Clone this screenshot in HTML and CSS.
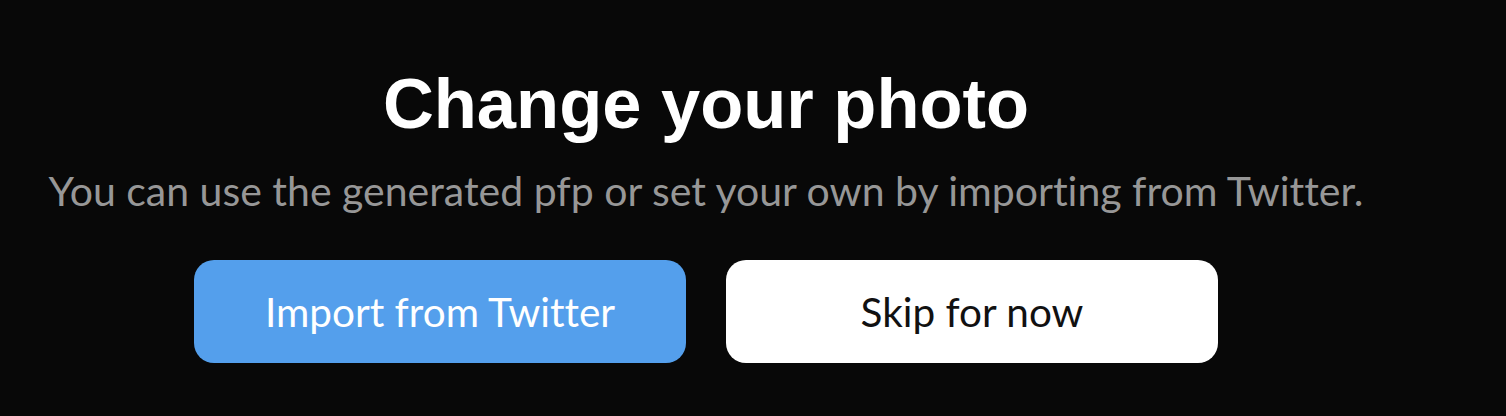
FILE: index.html
```html
<!DOCTYPE html>
<html lang="en">
<head>
    <meta charset="UTF-8">
    <meta name="viewport" content="width=device-width, initial-scale=1.0">
    <title>Change your photo</title>
    <link rel="stylesheet" href="styles.css">
</head>
<body>

    <div class="photo-step">
        <h1 class="step-title">Change your photo</h1>
        <p class="step-text">You can use the generated pfp or set your own by importing from Twitter.</p>

        <div class="step-actions">
            <button class="btn btn-twitter">Import from Twitter</button>
            <button class="btn btn-skip">Skip for now</button>
        </div>
    </div>

</body>
</html>
```

FILE: styles.css
```css
/* Reset */
* {
    margin: 0;
    padding: 0;
    box-sizing: border-box;
}

body {
    background: #080808;
    color: white;
    font-family: "Liberation Sans", Arial, sans-serif;
    font-variant-ligatures: none;
    height: 100vh;
    padding: 0 94px 0 0;
}

/* Step container */
.photo-step {
    display: flex;
    flex-direction: column;
    align-items: center;
    padding-top: 64px;
}

.step-title {
    font-size: 70.5px;
    font-weight: bold;
    line-height: 80px;
}

.step-text {
    margin-top: 23px;
    font-family: Lato, sans-serif;
    font-size: 41px;
    color: #979797;
    line-height: 48px;
    white-space: nowrap;
}

/* Buttons */
.step-actions {
    display: flex;
    gap: 40px;
    margin-top: 45px;
}

.btn {
    width: 492px;
    height: 103px;
    border: none;
    border-radius: 20px;
    font-family: Lato, sans-serif;
    font-variant-ligatures: none;
    font-size: 40.5px;
    cursor: pointer;
}

.btn-twitter {
    background: #549fec;
    color: white;
}

.btn-skip {
    background: white;
    color: #111;
}
```
